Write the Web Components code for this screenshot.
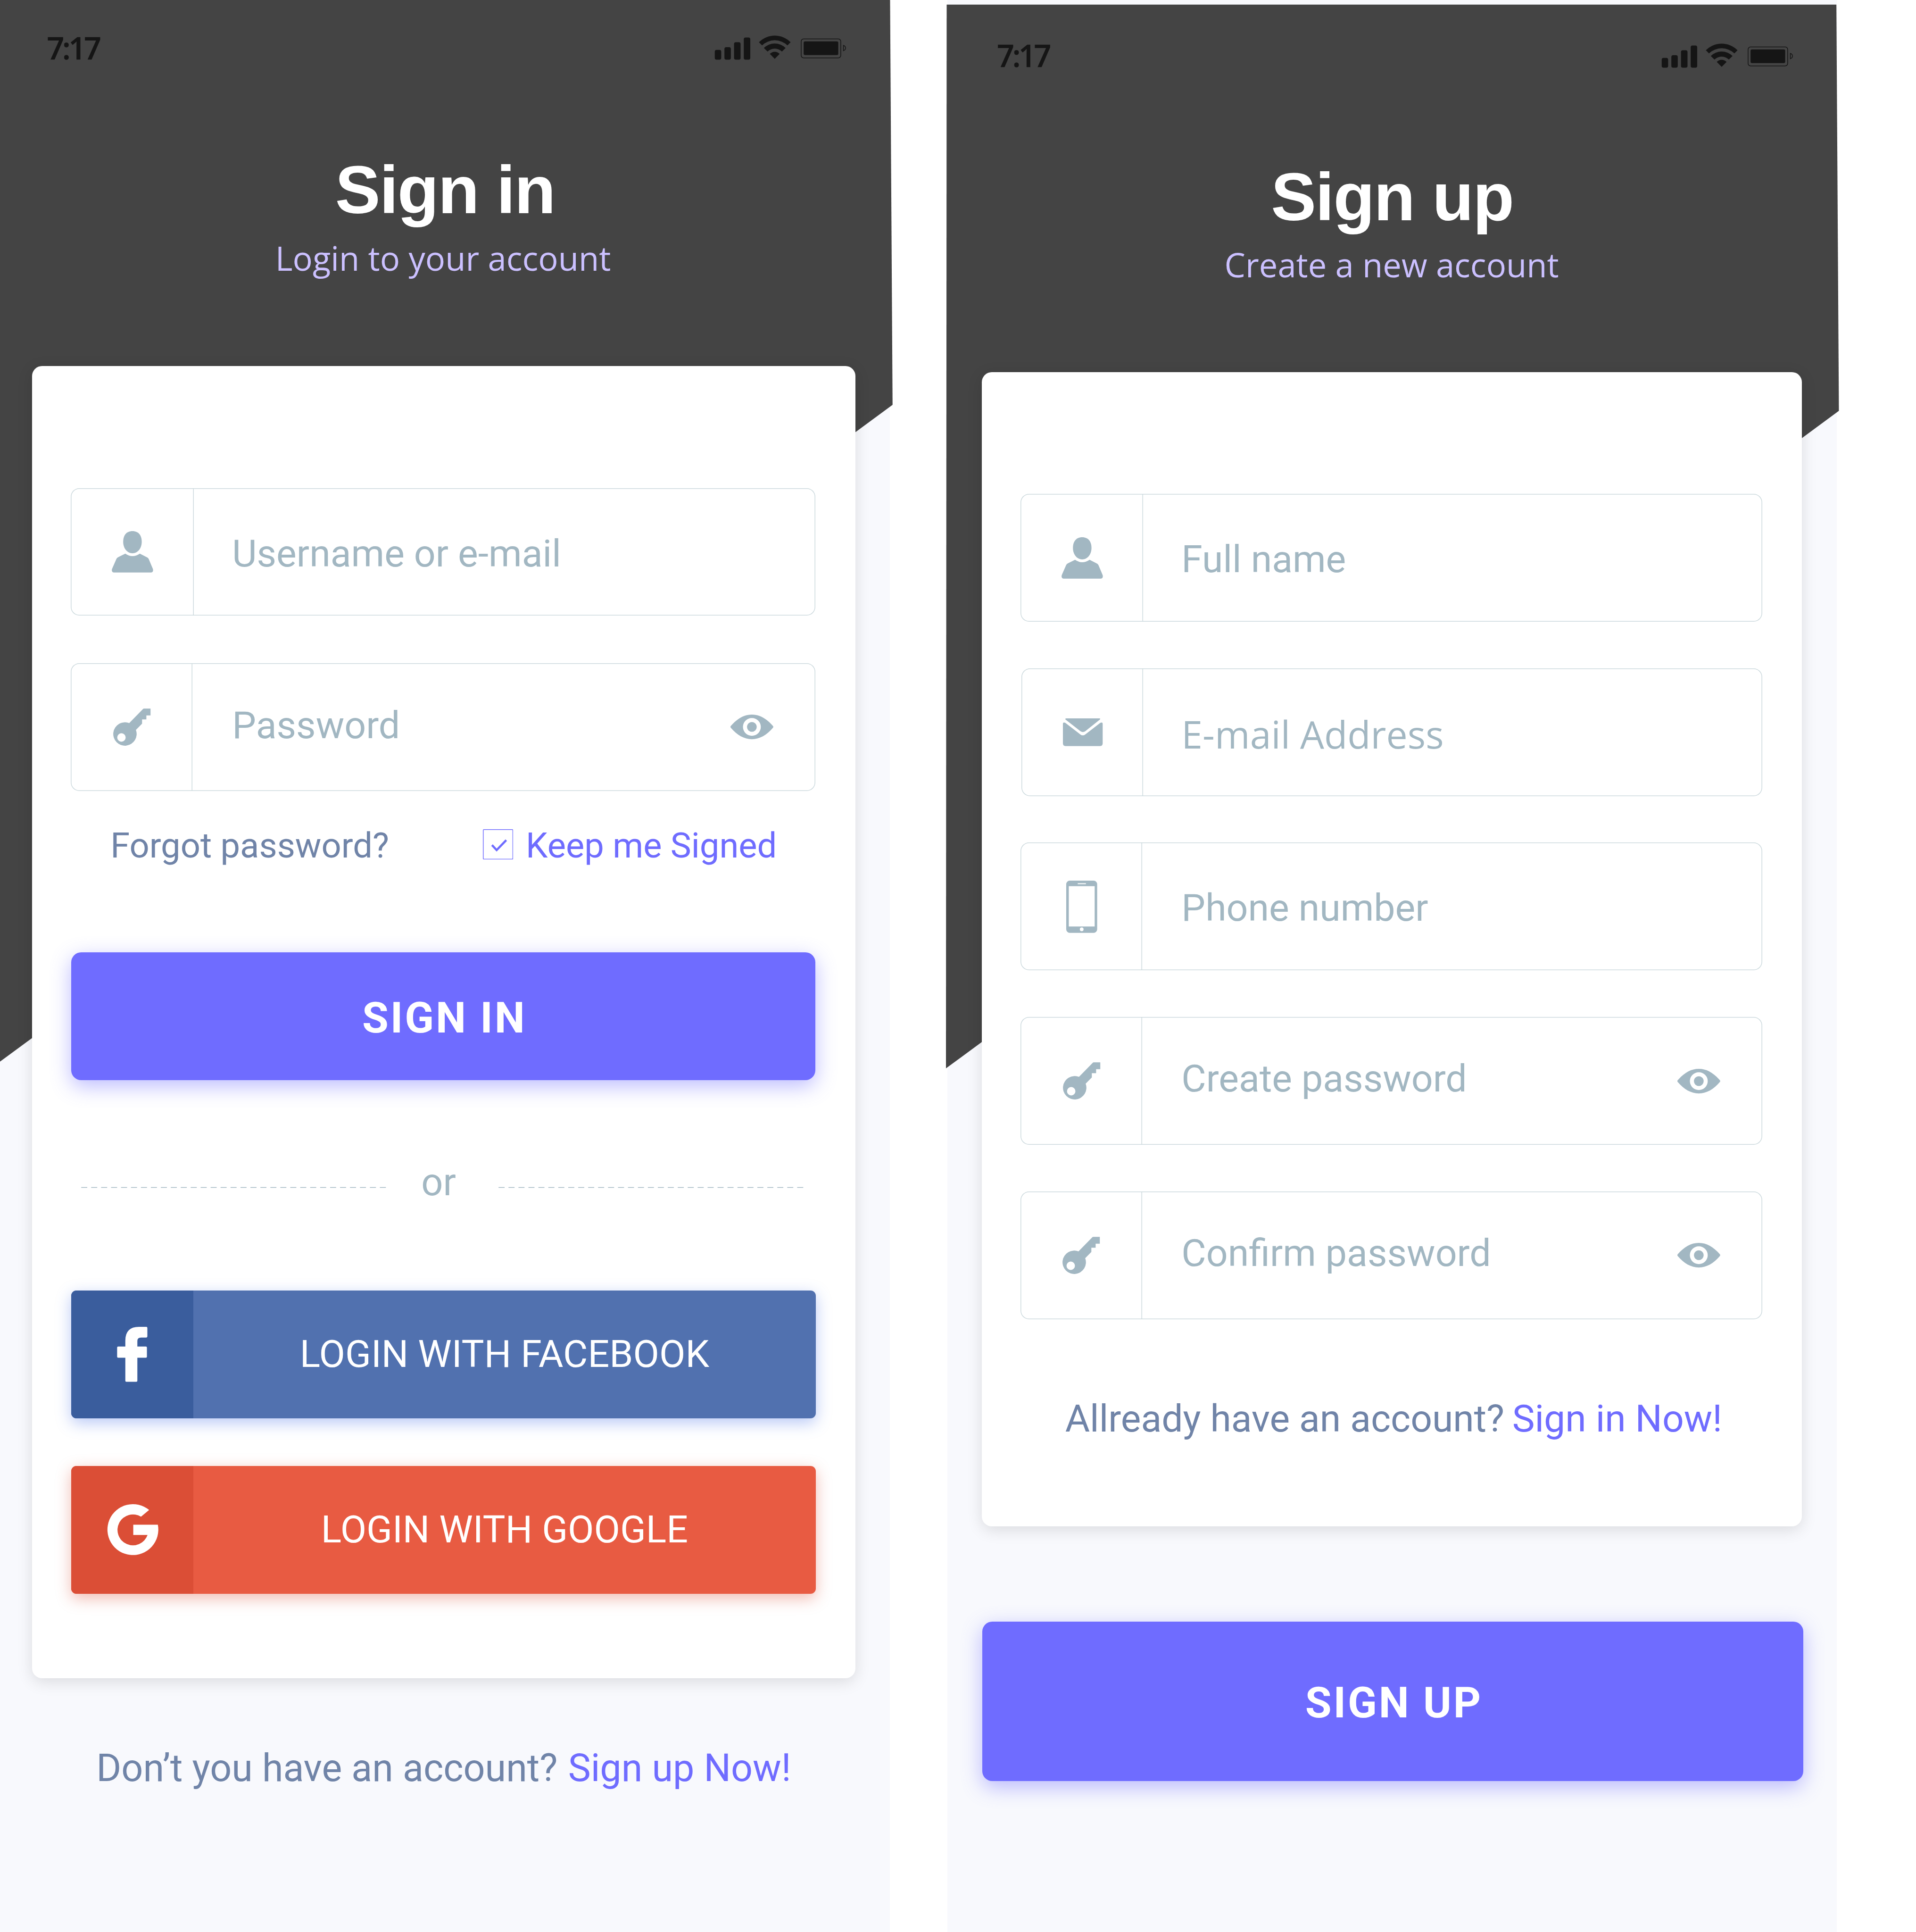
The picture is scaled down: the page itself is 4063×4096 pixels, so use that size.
<!DOCTYPE html>
<html lang="en">
<head>
<meta charset="utf-8">
<title>Sign in / Sign up</title>
<style>
  html { font-size: 75.68px; background: #fff; }
  body { margin: 0; height: 54.12rem; display: flex; gap: 1.61rem; overflow: hidden;
    font-family: Roboto, "Liberation Sans", sans-serif; }
</style>
</head>
<body>
<auth-screen style="--w:24.94rem" shape="0,0 2494,0 2501,1134 0,2974">
  <status-bar style="padding-top:.84rem" time="7:17"></status-bar>
  <screen-heading style="--t:2.48rem;--s:.26rem">Sign in<span slot="sub">Login to your account</span></screen-heading>
  <auth-card style="margin:2.37rem 0 0 .895rem;width:23.07rem;height:36.77rem;padding:3.42rem 1.12rem 0 1.09rem">
    <field-stack style="--gap:1.33rem">
      <icon-field icon="user" style="--cell:3.44rem;--nudge:.06rem;--ix:.005rem">Username or e-mail</icon-field>
      <icon-field icon="key" reveal style="--cell:3.41rem;--nudge:-.05rem;--ix:.01rem">Password</icon-field>
    </field-stack>
    <login-options></login-options>
    <primary-button style="margin:2.49rem 0 0 .015rem;height:3.587rem;--nudge:.055rem">SIGN IN</primary-button>
    <or-divider>or</or-divider>
    <social-button icon="facebook" style="margin:2.42rem -.015rem 0 .01rem;--dark:#3a5d9d;--light:#5171af;--glow:rgba(60,105,230,.36)">LOGIN WITH FACEBOOK</social-button>
    <social-button icon="google" style="margin:1.328rem -.015rem 0 .01rem;--dark:#db4e36;--light:#e85b42;--glow:rgba(219,78,54,.38)">LOGIN WITH GOOGLE</social-button>
  </auth-card>
  <account-prompt style="margin-top:1.92rem;padding-left:2.7rem;--gap:.295rem">Don’t you have an account?<span slot="link">Sign up Now!</span></account-prompt>
</auth-screen>

<auth-screen style="--w:24.92rem" shape="-2,13 2491,13 2498,1151 -4,2993">
  <status-bar style="padding-top:1.055rem;--left:1.385rem;--right:1.225rem" time="7:17"></status-bar>
  <screen-heading style="--t:2.465rem;--s:.25rem;--sx:.04rem">Sign up<span slot="sub">Create a new account</span></screen-heading>
  <auth-card style="margin:2.355rem 0 0 .955rem;width:22.99rem;height:32.34rem;padding:3.41rem 1.12rem 0 1.09rem">
    <field-stack style="--gap:1.306rem;--text:4.51rem">
      <icon-field icon="user" style="--cell:3.43rem;--nudge:.055rem;--ix:.015rem">Full name</icon-field>
      <icon-field icon="mail" style="margin-left:.02rem;--cell:3.41rem;--text:4.49rem;--nudge:.05rem;--ix:.02rem;--face:'Open Sans'">E-mail Address</icon-field>
      <icon-field icon="phone" style="--cell:3.41rem;--nudge:.045rem;--ix:.01rem">Phone number</icon-field>
      <icon-field icon="key" reveal style="--cell:3.41rem;--nudge:-.055rem;--ix:.01rem">Create password</icon-field>
      <icon-field icon="key" reveal style="--cell:3.41rem;--nudge:-.053rem">Confirm password</icon-field>
    </field-stack>
    <account-prompt style="margin-top:2.19rem;padding-left:1.25rem;--gap:.22rem;font-size:1.063rem">Allready have an account?<span slot="link">Sign in Now!</span></account-prompt>
  </auth-card>
  <primary-button style="margin:2.665rem 0 0 .975rem;width:23.01rem;height:4.465rem;--nudge:.05rem">SIGN UP</primary-button>
</auth-screen>

<script>
const ICONS = {
  user: ['313 1489 116 116', '<path d="M371 1489C388 1489 397 1501 397 1519C397 1538 385 1551 371 1551C357 1551 345 1538 345 1519C345 1501 354 1489 371 1489Z"/><path d="M351 1552Q371 1566 391.7 1552L411 1562Q415 1563.4 416.5 1567L428.3 1595Q430.5 1604 423.5 1605H318.500Q311.500 1604 313.700 1595L326 1567Q327.500 1563.400 331 1562Z"/>'],
  key: ['318 1985 105 104.500', '<path fill-rule="evenodd" d="M363 2026L401.500 1986.500Q402.700 1985.200 404 1985.200H422.700V2004.600H411V2015.800H399V2027.600L381.700 2045A32.800 32.800 0 1 1 363 2026ZM341.200 2054.500A11.800 11.800 0 1 0 341.200 2078.100A11.800 11.800 0 1 0 341.200 2054.500Z"/>'],
  mail: ['2978.300 2012.800 111.400 77.500', '<path d="M2987 2012.800H3081Q3084.500 2013.600 3081.500 2016.300L3040.500 2049.300Q3034 2053 3028 2049.300L2986 2016.300Q2983.500 2013.600 2987 2012.800Z"/><path d="M2978.300 2028Q2978.700 2022 2985 2025.500L3027.300 2058Q3034 2063 3040.700 2058L3083 2025.500Q3089.300 2022 3089.700 2028V2083Q3089.700 2090.300 3082.500 2090.300H2985.500Q2978.300 2090.300 2978.300 2083Z"/>'],
  phone: ['2987.300 2466.500 86.700 146.300', '<path fill-rule="evenodd" d="M2997.300 2466.500H3064A10 10 0 0 1 3074 2476.500V2602.800A10 10 0 0 1 3064 2612.800H2997.300A10 10 0 0 1 2987.300 2602.800V2476.500A10 10 0 0 1 2997.300 2466.500ZM2994.500 2482V2595H3067V2482ZM3019.500 2473.700V2476.500H3042.500V2473.700ZM3030.700 2597.800A5.200 5.200 0 1 0 3030.700 2608.200A5.200 5.200 0 1 0 3030.700 2597.800Z"/>'],
  eye: ['2045 2003 120 69', '<path fill-rule="evenodd" d="M2045.500 2039.500Q2044.500 2037.500 2045.500 2035.500C2064 2014 2083 2003 2105 2003S2146 2014 2164.500 2035.500Q2165.500 2037.500 2164.500 2039.500C2146 2061 2127 2072 2105 2072S2064 2061 2045.500 2039.500ZM2105 2012.500A25 25 0 1 0 2105 2062.500A25 25 0 1 0 2105 2012.500Z"/><circle cx="2105" cy="2037.500" r="13.700"/>'],
  facebook: ['328.500 3716.500 85 154', '<path d="M352 3771.600V3755Q352 3716.500 390 3716.500H410.700Q413.700 3716.500 413.700 3719.500V3743.400Q413.700 3746.400 410.700 3746.400H396Q385.700 3746.400 385.700 3756V3771.600H409.500Q412.500 3771.600 412.500 3774.600V3800.200Q412.500 3803.200 409.500 3803.200H385.700V3867.400Q385.700 3870.400 382.700 3870.400H355Q352 3870.400 352 3867.400V3803.200H332Q329 3803.200 329 3800.200V3774.600Q329 3771.600 332 3771.600Z"/>'],
  google: ['299.500 4214.700 143.300 142.600', '<path d="M418.700 4231A71.300 71.300 0 1 0 443.200 4272.200H374.300V4301H414.300A43.300 43.300 0 1 1 396 4249.800Z"/>'],
  status: ['2001 99 369 69', `<g>
    <rect x="2002" y="139.700" width="18" height="27.500" rx="5"/><rect x="2029" y="132" width="18" height="35.200" rx="5"/>
    <rect x="2056" y="118" width="18.300" height="49.200" rx="5"/><rect x="2083.200" y="105" width="18.300" height="62.200" rx="5"/>
    <path d="M2125.700 118.300A62.300 62.300 0 0 1 2214.500 118.300L2205.600 127A51.200 51.200 0 0 0 2134.500 127Z"/>
    <path d="M2139.500 134.300A43.200 43.200 0 0 1 2200.500 134.300L2190.200 144.300A28.700 28.700 0 0 0 2149.800 144.300Z"/>
    <path d="M2156.300 151A18.600 18.600 0 0 1 2183.700 151L2170 164.700Z"/>
    <rect x="2251" y="116" width="97" height="38.300" rx="4"/></g>
    <g fill="none" stroke="currentColor" stroke-width="2"><rect x="2244" y="109" width="111" height="53" rx="7"/><path d="M2362.500 127V142Q2368.500 140 2368.500 134.500T2362.500 127Z"/></g>`]
};

const define = (name, css, html) => customElements.define(name, class extends HTMLElement {
  connectedCallback() {
    const root = this.attachShadow({ mode: 'open' });
    root.innerHTML = `<style>*{box-sizing:border-box}:host{box-sizing:border-box;display:block}${css}</style>` +
      (typeof html === 'function' ? html(this) : html);
  }
});

define('ui-icon', ':host{flex:none}svg{display:block;fill:currentColor;overflow:visible}', el => {
  const [box, body] = ICONS[el.getAttribute('name')];
  const [, , w, h] = box.split(' ');
  return `<svg viewBox="${box}" style="width:${w / 100}rem;height:${h / 100}rem" aria-hidden="true">${body}</svg>`;
});

define('auth-screen', `
  :host{position:relative;isolation:isolate;flex:none;width:var(--w);height:54.12rem;background:#f8f9fd}
  .shape{position:absolute;z-index:-1;left:0;top:0;width:25rem;height:30rem;overflow:visible;fill:#444}`,
  el => `<svg class="shape" viewBox="0 0 2500 3000" aria-hidden="true"><polygon points="${el.getAttribute('shape')}"/></svg><slot></slot>`);

define('status-bar', `
  .row{height:1rem;padding:0 var(--right,1.23rem) 0 var(--left,1.315rem);display:flex;align-items:center;justify-content:space-between;color:#151515}
  span{font:600 .85rem/1rem "Open Sans",sans-serif;letter-spacing:-.056rem;-webkit-text-stroke:.008rem currentColor}`,
  el => `<div class="row"><span>${el.getAttribute('time')}</span><ui-icon name="status"></ui-icon></div>`);

define('screen-heading', `
  :host{text-align:center}
  h1{margin:var(--t) 0 0;font:700 1.9rem/2rem "Liberation Sans",Arial,sans-serif;letter-spacing:-.025rem;color:#fff}
  p{margin:var(--s) 0 0;padding:0 .11rem 0 calc(2*var(--sx,0rem));font:400 .932rem/1.3rem "Open Sans",sans-serif;color:#cbc0ff}`,
  '<h1><slot></slot></h1><p><slot name="sub"></slot></p>');

define('auth-card', ':host{background:#fff;border-radius:.28rem;box-shadow:0 .1rem .44rem rgba(0,0,0,.12)}', '<slot></slot>');

define('field-stack', ':host{display:flex;flex-direction:column;gap:var(--gap)}', '<slot></slot>');

define('icon-field', `
  :host{height:3.58rem;display:grid;grid-template-columns:var(--cell) 1fr auto;align-items:center;border-radius:.24rem;
    box-shadow:inset 0 0 0 .02rem #cddade;color:#a2b7c2}
  .cell{align-self:stretch;display:flex;align-items:center;justify-content:center;padding-left:calc(2*var(--ix,0rem));box-shadow:inset -.02rem 0 0 #cddade}
  .label{margin-top:calc(2*var(--nudge,0rem));padding-left:calc(var(--text,4.52rem) - var(--cell));font:400 1.065rem/1.3rem var(--face,Roboto),sans-serif;white-space:nowrap}
  .eye{margin-right:1.18rem}`,
  el => `<div class="cell"><ui-icon name="${el.getAttribute('icon')}"></ui-icon></div><div class="label"><slot></slot></div>` +
    (el.hasAttribute('reveal') ? '<ui-icon class="eye" name="eye"></ui-icon>' : ''));

define('login-options', `
  :host{margin-top:1.03rem;height:1rem;display:grid;grid-template-columns:11.54rem 1fr;align-items:center;font-size:.979rem;line-height:1rem;white-space:nowrap}
  .forgot{padding-left:1.11rem;color:#7084a8}
  .keep{display:flex;align-items:center;gap:.36rem;color:#6f6cff}
  svg{display:block;width:.85rem;height:.85rem;margin-bottom:.07rem;fill:none;stroke:currentColor}`, `
  <span class="forgot">Forgot password?</span>
  <span class="keep"><svg viewBox="0 0 85 85" aria-hidden="true"><rect x="1" y="1" width="83" height="83" rx="2" stroke-width="2"/><path d="M25.500 44.500L38.500 58.500L65.500 30.500" stroke-width="6"/></svg>Keep me Signed</span>`);

define('primary-button', `
  :host{display:flex;align-items:center;justify-content:center;border-radius:.28rem;background:#6f6cff;
    box-shadow:0 .17rem .56rem rgba(111,108,255,.46)}
  span{margin-top:calc(2*var(--nudge,0rem));padding-left:.06rem;font:700 1.2rem/1.4rem Roboto,sans-serif;letter-spacing:.051rem;color:#fff}`,
  '<span><slot></slot></span>');

define('or-divider', `
  :host{margin:2.266rem 0 0 .27rem;height:1.2rem;display:grid;grid-template-columns:8.57rem 3.13rem 8.57rem;align-items:center;color:#a2b7c2}
  span{padding-left:.98rem;font-size:1.07rem;line-height:1.2rem}
  svg{display:block;width:8.57rem;height:.04rem;margin-top:.27rem;stroke:currentColor;stroke-width:2;stroke-dasharray:17 11}`, `
  <svg viewBox="0 0 857 4"><path d="M0 2H857"/></svg><span><slot></slot></span><svg viewBox="0 0 857 4"><path d="M0 2H857"/></svg>`);

define('social-button', `
  :host{height:3.583rem;display:grid;grid-template-columns:3.42rem 1fr;border-radius:.15rem;background:var(--light);box-shadow:0 .12rem .42rem var(--glow);color:#fff}
  .cell{display:flex;align-items:center;justify-content:center;background:var(--dark);border-radius:.15rem 0 0 .15rem}
  .label{display:flex;align-items:center;justify-content:center;font-size:1.065rem;line-height:1.3rem;white-space:nowrap}`,
  el => `<div class="cell"><ui-icon name="${el.getAttribute('icon')}"></ui-icon></div><div class="label"><slot></slot></div>`);

define('account-prompt', `
  :host{height:1.2rem;display:flex;gap:var(--gap);font-size:1.068rem;line-height:1.2rem;white-space:nowrap;color:#7084a8}
  .link{color:#6f6cff}`,
  '<span><slot></slot></span><span class="link"><slot name="link"></slot></span>');
</script>
</body>
</html>
